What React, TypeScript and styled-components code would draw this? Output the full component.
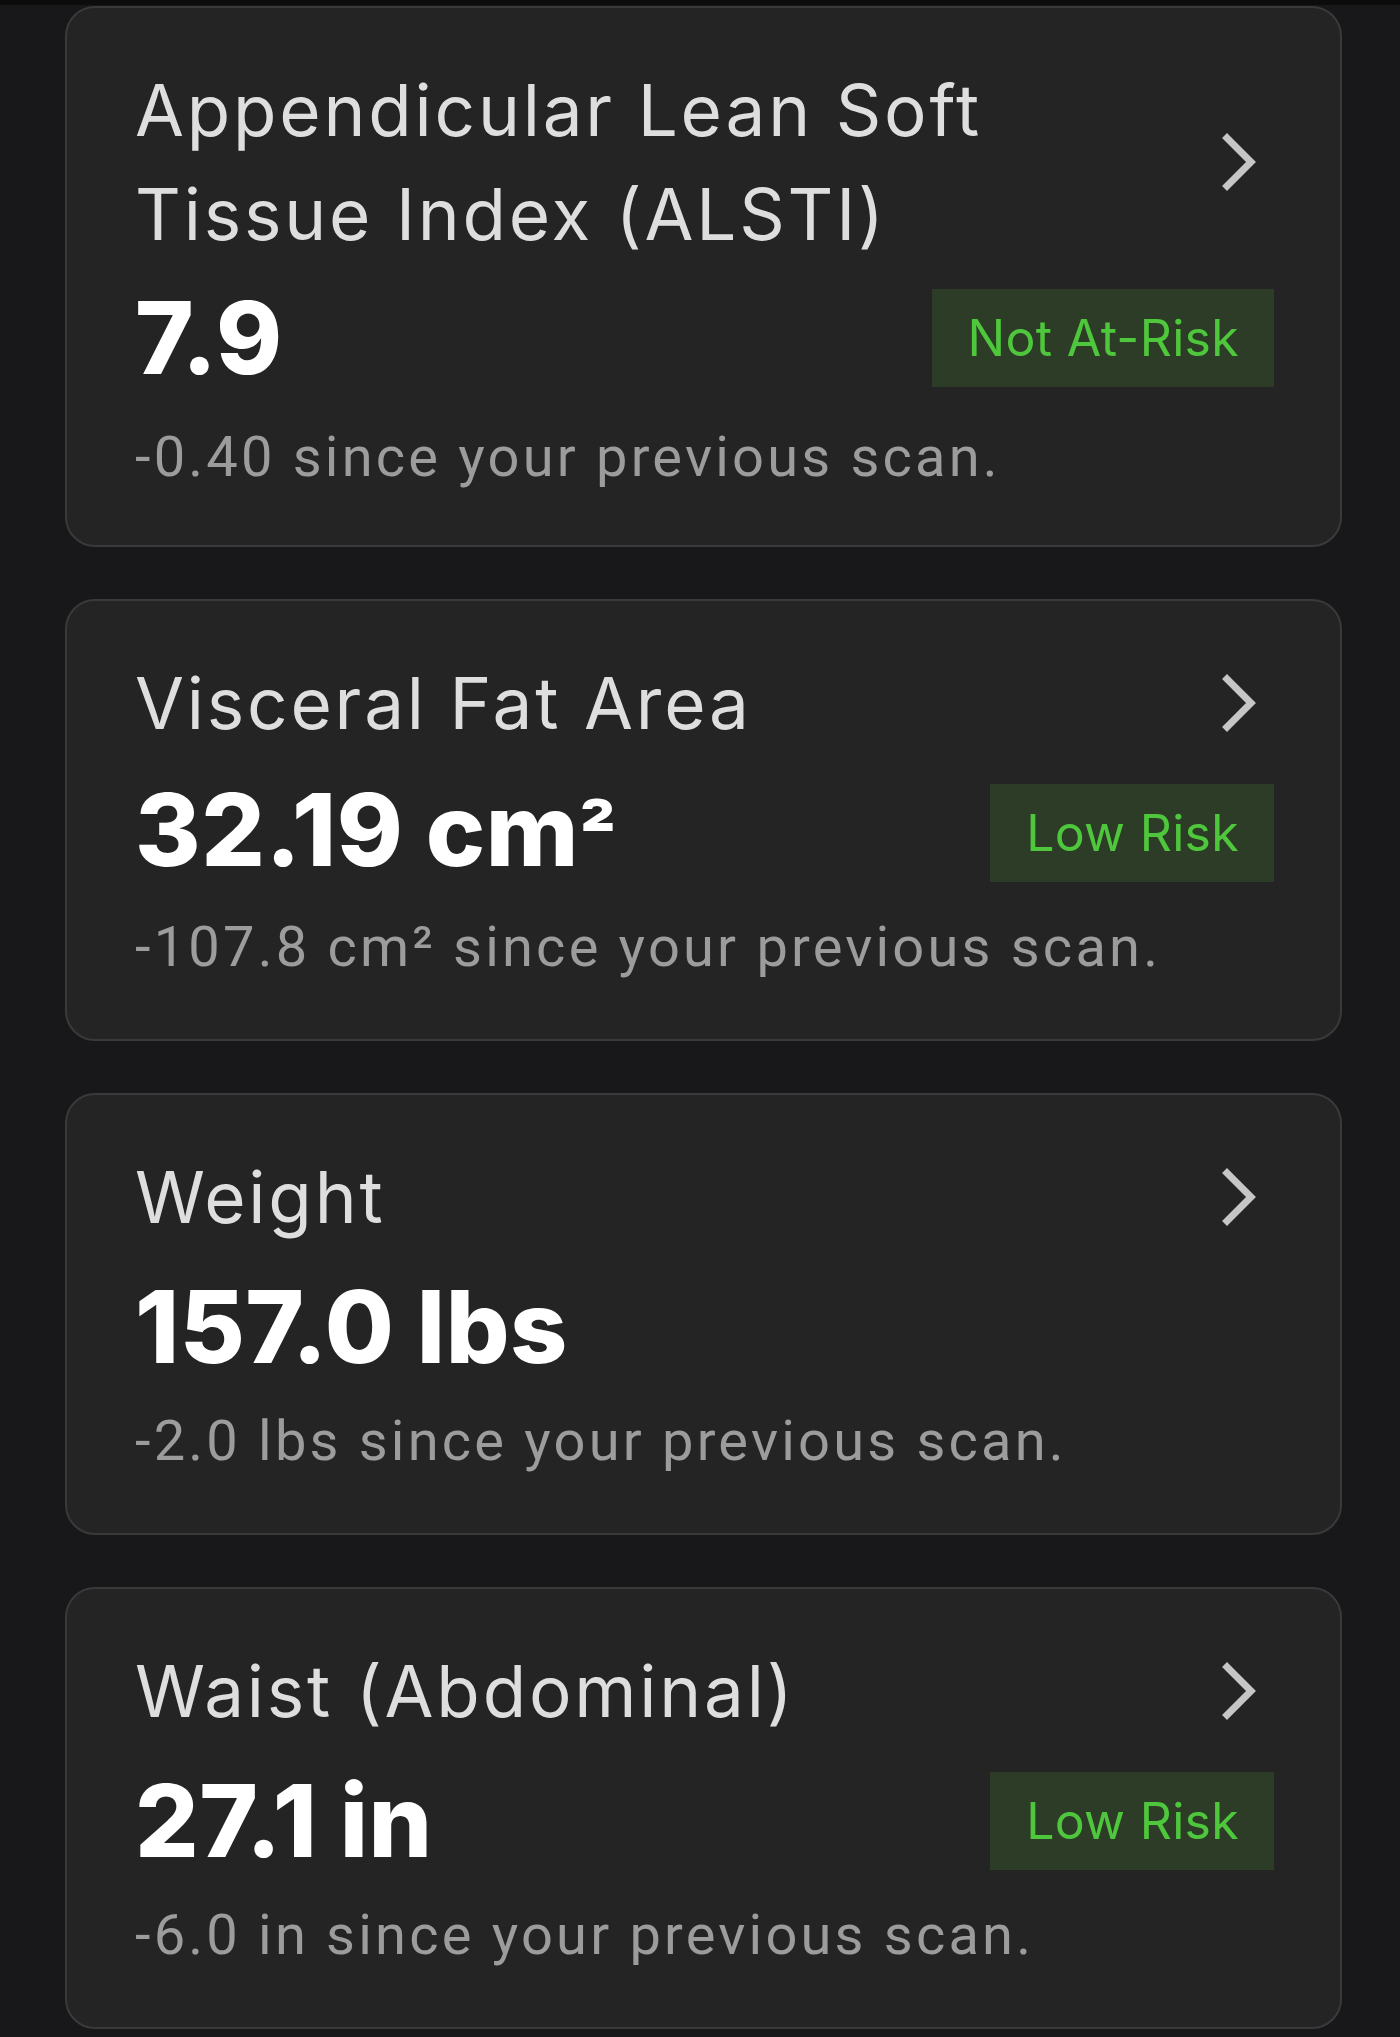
import React from 'react';
import styled, { createGlobalStyle } from 'styled-components';

type Metric = {
    title: string[];
    value: string;
    unit?: string;
    change: string;
    risk?: string;
};

const metrics: Metric[] = [
    {
        title: ['Appendicular Lean Soft', 'Tissue Index (ALSTI)'],
        value: '7.9',
        change: '-0.40 since your previous scan.',
        risk: 'Not At-Risk',
    },
    {
        title: ['Visceral Fat Area'],
        value: '32.19 cm',
        unit: '²',
        change: '-107.8 cm² since your previous scan.',
        risk: 'Low Risk',
    },
    {
        title: ['Weight'],
        value: '157.0 lbs',
        change: '-2.0 lbs since your previous scan.',
    },
    {
        title: ['Waist (Abdominal)'],
        value: '27.1 in',
        change: '-6.0 in since your previous scan.',
        risk: 'Low Risk',
    },
];

const Chevron = () => (
    <svg width="44" height="64" viewBox="0 0 44 64" fill="none">
        <polyline
            points="9,8 33,32 9,56"
            stroke="#c6c6c6"
            strokeWidth="7"
            strokeLinecap="square"
            strokeLinejoin="miter"
        />
    </svg>
);

const App = () => {
    return (
        <>
            <GlobalStyle />
            <Page>
                {metrics.map((item) => {
                    const tight = item.title.length > 1;
                    return (
                        <Card key={item.value} $tight={tight}>
                            <Header>
                                <Title>
                                    {item.title.map((line) => (
                                        <TitleLine key={line}>{line}</TitleLine>
                                    ))}
                                </Title>
                                <ChevronBox>
                                    <Chevron />
                                </ChevronBox>
                            </Header>
                            <ValueRow $tight={tight}>
                                <Value>
                                    {item.value}
                                    {item.unit && <Sup>{item.unit}</Sup>}
                                </Value>
                                {item.risk && <Badge>{item.risk}</Badge>}
                            </ValueRow>
                            <Change $tight={tight}>{item.change}</Change>
                        </Card>
                    );
                })}
            </Page>
        </>
    );
};

const GlobalStyle = createGlobalStyle`
    html, body {
        margin: 0;
        padding: 0;
        background: #18181a;
    }
    * {
        box-sizing: border-box;
    }
`;

const Page = styled.div`
    min-height: 2037px;
    background: #18181a;
    border-top: 5px solid #0c0c0d;
    padding: 1px 58px 11px 65px;
    display: flex;
    flex-direction: column;
    gap: 52px;
`;

const Card = styled.div<{ $tight?: boolean }>`
    background: #242424;
    border: 2px solid #3a3a3a;
    border-radius: 30px;
    padding: 50px 66px ${(p) => (p.$tight ? '52px' : '56px')} 68px;
    display: flex;
    flex-direction: column;
`;

const Header = styled.div`
    display: flex;
    justify-content: space-between;
    align-items: center;
`;

const Title = styled.div`
    font-family: Inter, 'Noto Sans', sans-serif;
    font-size: 71px;
    font-weight: 400;
    line-height: 104px;
    letter-spacing: 2.8px;
    color: #dedede;
`;

const TitleLine = styled.div`
    white-space: nowrap;
`;

const ChevronBox = styled.div`
    display: flex;
    align-items: center;
    margin-right: 12px;
`;

const ValueRow = styled.div<{ $tight?: boolean }>`
    display: flex;
    justify-content: space-between;
    align-items: center;
    height: 100px;
    margin-top: ${(p) => (p.$tight ? '22px' : '28px')};
`;

const Value = styled.div`
    font-family: Inter, 'Noto Sans', sans-serif;
    font-size: 100px;
    font-weight: 800;
    line-height: 100px;
    letter-spacing: 0.5px;
    color: #ffffff;
`;

const Sup = styled.span`
    font-size: 0.8em;
`;

const Badge = styled.div`
    height: 98px;
    padding: 0 35px 0 36px;
    display: flex;
    align-items: center;
    background: #2c3c27;
    color: #4fc73c;
    font-family: Inter, 'Noto Sans', sans-serif;
    font-size: 50px;
    font-weight: 400;
    letter-spacing: 0.3px;
`;

const Change = styled.div<{ $tight?: boolean }>`
    margin-top: ${(p) => (p.$tight ? '33px' : '28px')};
    font-family: Roboto, 'Noto Sans', sans-serif;
    font-size: 56px;
    line-height: 72px;
    letter-spacing: 3.2px;
    color: #9c9c9c;
    white-space: nowrap;
`;

export default App;
